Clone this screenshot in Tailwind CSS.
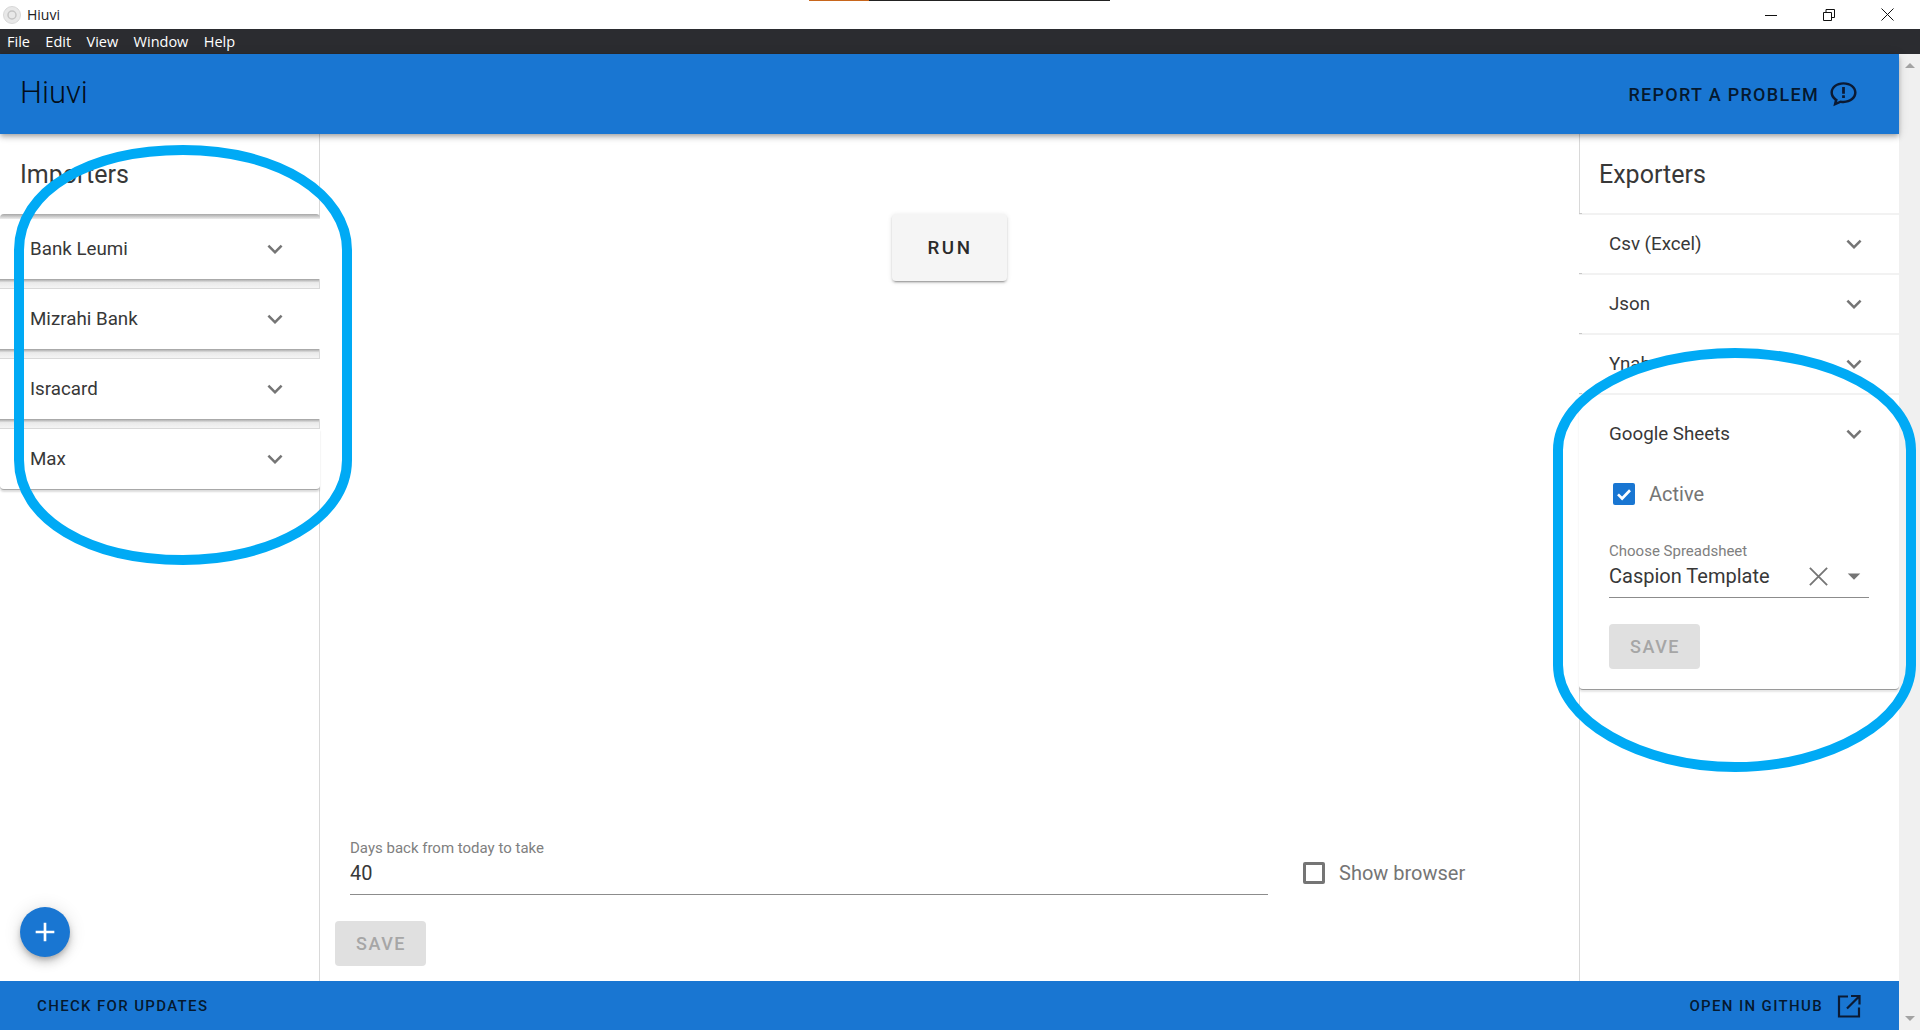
<!DOCTYPE html>
<html lang="en">

<head>
    <meta charset="UTF-8" />
    <title>Hiuvi</title>
    <script src="https://cdn.jsdelivr.net/npm/@tailwindcss/browser@4"></script>
</head>

<body class="relative h-[1030px] w-[1920px] overflow-hidden bg-white flex flex-col font-[Roboto,sans-serif] text-[#383838]">

    <!-- Window title bar -->
    <div class="relative h-[29px] shrink-0 flex items-center bg-white">
        <div class="absolute top-0 left-[809px] h-px w-[60px] bg-[#c8661c]"></div>
        <div class="absolute top-0 left-[869px] h-px w-[241px] bg-[#222222]"></div>
        <svg class="ml-[3px] w-[18px] h-[18px]" viewBox="0 0 18 18">
            <circle cx="9" cy="9" r="8.5" fill="#e8e8e8" stroke="#d8d8d8" />
            <circle cx="9" cy="9" r="4" fill="none" stroke="#c4c4c4" stroke-width="1.5" />
        </svg>
        <span class="ml-[6px] text-[14px] font-['Open_Sans',sans-serif] text-[#222222]">Hiuvi</span>
        <div class="ml-auto flex items-center pr-[26px] gap-[46px]">
            <svg class="w-[12px] h-[12px]" viewBox="0 0 12 12"><path d="M0 6.5H12" stroke="#111" fill="none" /></svg>
            <svg class="w-[12px] h-[12px]" viewBox="0 0 12 12"><path d="M.5 3.5h8v8h-8zM3 3.5V.5h8.500v8H8.500" stroke="#111" fill="none" /></svg>
            <svg class="w-[13px] h-[13px]" viewBox="0 0 13 13"><path d="M.5 .5l12 12M12.500 .5l-12 12" stroke="#111" fill="none" /></svg>
        </div>
    </div>

    <!-- Menu bar -->
    <div class="h-[25px] shrink-0 bg-[#2b2c30] flex items-center pl-[7px] gap-[15.4px] text-[14.5px] font-['Open_Sans',sans-serif] text-white">
        <span>File</span>
        <span>Edit</span>
        <span>View</span>
        <span>Window</span>
        <span>Help</span>
    </div>

    <div class="flex-1 flex min-h-0">
        <div class="w-[1899px] flex flex-col">

            <!-- Header -->
            <header class="relative z-10 h-[80px] shrink-0 bg-[#1976d2] flex items-center justify-between pl-[20px] pr-[39px] shadow-[0_2px_4px_-1px_rgba(0,0,0,0.2),0_4px_5px_0_rgba(0,0,0,0.14),0_1px_10px_0_rgba(0,0,0,0.12)]">
                <h1 class="text-[31px] font-light -mt-[2px] text-black/90">Hiuvi</h1>
                <div class="flex items-center gap-[8px]">
                    <span class="text-[18px] font-medium tracking-[1.3px] text-black/80">REPORT A PROBLEM</span>
                    <svg class="w-[33px] h-[33px]" viewBox="0 0 24 24" fill="#0b1a33">
                        <path d="M12 3C6.500 3 2.500 6.400 2.500 10.600c0 2.300 1.200 4.300 3.100 5.700l-1 4.200 5.300-2.400c.7.1 1.400.2 2.100.2 5.500 0 9.500-3.400 9.500-7.700S17.500 3 12 3zm0 13.600c-.7 0-1.400-.1-2.200-.2l-2.500 1.100.5-2-.8-.5c-1.700-1.100-2.700-2.700-2.700-4.400C4.300 7.400 7.700 4.800 12 4.800s7.700 2.600 7.700 5.800-3.400 6-7.700 6z" />
                        <path d="M11 6.500h2v5h-2zM11 12.500h2v2h-2z" />
                    </svg>
                </div>
            </header>

            <div class="flex-1 flex min-h-0">

                <!-- Importers -->
                <aside class="relative w-[320px] shrink-0 border-r border-[#d9d9d9]">
                    <h2 class="pl-[20px] pt-[23px] h-[80px] text-[25px] leading-[36px]">Importers</h2>
                    <div class="flex flex-col -mr-px">
                        <div class="h-[5px] rounded-t-[4px] bg-linear-to-b from-[#a8a8a8] to-[#eeeeee]"></div>
                        <div class="h-[60px] flex items-center justify-between pl-[30px] pr-[30px] text-[18.75px] bg-white">
                            <span>Bank Leumi</span>
                            <svg class="w-[30px] h-[30px]" viewBox="0 0 24 24" fill="#757575"><path d="M16.590 8.590 12 13.170 7.410 8.590 6 10l6 6 6-6z" /></svg>
                        </div>
                        <div class="h-[10px] bg-linear-to-b from-[#a0a0a0] via-[#eaeaea] via-40% to-[#f4f4f4] border-b border-r border-[#d9d9d9]"></div>
                        <div class="h-[60px] flex items-center justify-between pl-[30px] pr-[30px] text-[18.75px] bg-white">
                            <span>Mizrahi Bank</span>
                            <svg class="w-[30px] h-[30px]" viewBox="0 0 24 24" fill="#757575"><path d="M16.590 8.590 12 13.170 7.410 8.590 6 10l6 6 6-6z" /></svg>
                        </div>
                        <div class="h-[10px] bg-linear-to-b from-[#a0a0a0] via-[#eaeaea] via-40% to-[#f4f4f4] border-b border-r border-[#d9d9d9]"></div>
                        <div class="h-[60px] flex items-center justify-between pl-[30px] pr-[30px] text-[18.75px] bg-white">
                            <span>Isracard</span>
                            <svg class="w-[30px] h-[30px]" viewBox="0 0 24 24" fill="#757575"><path d="M16.590 8.590 12 13.170 7.410 8.590 6 10l6 6 6-6z" /></svg>
                        </div>
                        <div class="h-[10px] bg-linear-to-b from-[#a0a0a0] via-[#eaeaea] via-40% to-[#f4f4f4] border-b border-r border-[#d9d9d9]"></div>
                        <div class="h-[61px] flex items-center justify-between pl-[30px] pr-[30px] text-[18.75px] bg-white rounded-b-[4px] border-b border-[#a8a8a8] shadow-[0_2px_2px_rgba(0,0,0,0.14)]">
                            <span>Max</span>
                            <svg class="w-[30px] h-[30px]" viewBox="0 0 24 24" fill="#757575"><path d="M16.590 8.590 12 13.170 7.410 8.590 6 10l6 6 6-6z" /></svg>
                        </div>
                    </div>
                    <button class="absolute left-[20px] bottom-[24px] w-[50px] h-[50px] rounded-full bg-[#1976d2] flex items-center justify-center shadow-[0_3px_5px_-1px_rgba(0,0,0,0.2),0_6px_10px_0_rgba(0,0,0,0.14),0_1px_18px_0_rgba(0,0,0,0.12)]">
                        <svg class="w-[32px] h-[32px]" viewBox="0 0 24 24" fill="#fff"><path d="M19 13h-6v6h-2v-6H5v-2h6V5h2v6h6v2z" /></svg>
                    </button>
                </aside>

                <!-- Run and settings -->
                <main class="flex-1 flex flex-col items-stretch min-w-0">
                    <div class="flex justify-center pt-[80px] pr-px">
                        <button class="w-[115px] h-[67px] pt-[2px] pl-[2px] rounded-[4px] bg-[#f5f5f5] text-[18.75px] font-medium tracking-[2.5px] text-[#2b2b2b] shadow-[0_3px_1px_-2px_rgba(0,0,0,0.2),0_2px_2px_0_rgba(0,0,0,0.14),0_1px_5px_0_rgba(0,0,0,0.12)]">RUN</button>
                    </div>
                    <div class="mt-auto pl-[15px] pb-[15px]">
                        <div class="flex items-start pl-[15px]">
                            <div class="w-[918px]">
                                <div class="text-[15px] leading-[20px] text-[#808080]">Days back from today to take</div>
                                <div class="h-[37px] flex items-center pb-[6px] text-[20px] border-b border-[#8c8c8c]">40</div>
                            </div>
                            <label class="ml-[35px] mt-[20px] flex items-center gap-[14px] text-[20px] text-[#757575]">
                                <span class="w-[22px] h-[22px] rounded-[2px] border-[3px] border-[#757575]"></span>
                                Show browser
                            </label>
                        </div>
                        <button class="mt-[26px] pl-px w-[91px] h-[45px] rounded-[4px] bg-[#e0e0e0] text-[18px] font-medium tracking-[1.5px] text-[#a6a6a6]">SAVE</button>
                    </div>
                </main>

                <!-- Exporters -->
                <aside class="w-[320px] shrink-0 border-l border-[#d9d9d9]">
                    <h2 class="pl-[19px] pt-[23px] h-[79px] text-[25px] leading-[36px]">Exporters</h2>
                    <div class="flex flex-col -ml-px">
                        <div class="h-[2px] bg-[#f2f2f2]"><div class="w-[3px] h-px bg-[#c8c8c8]"></div></div>
                        <div class="h-[58px] flex items-center justify-between pl-[30px] pr-[30px] text-[18.75px] bg-white">
                            <span>Csv (Excel)</span>
                            <svg class="w-[30px] h-[30px]" viewBox="0 0 24 24" fill="#757575"><path d="M16.590 8.590 12 13.170 7.410 8.590 6 10l6 6 6-6z" /></svg>
                        </div>
                        <div class="h-[2px] bg-[#f2f2f2]"><div class="w-[3px] h-px bg-[#c8c8c8]"></div></div>
                        <div class="h-[58px] flex items-center justify-between pl-[30px] pr-[30px] text-[18.75px] bg-white">
                            <span>Json</span>
                            <svg class="w-[30px] h-[30px]" viewBox="0 0 24 24" fill="#757575"><path d="M16.590 8.590 12 13.170 7.410 8.590 6 10l6 6 6-6z" /></svg>
                        </div>
                        <div class="h-[2px] bg-[#f2f2f2]"><div class="w-[3px] h-px bg-[#c8c8c8]"></div></div>
                        <div class="h-[58px] flex items-center justify-between pl-[30px] pr-[30px] text-[18.75px] bg-white">
                            <span>Ynab</span>
                            <svg class="w-[30px] h-[30px]" viewBox="0 0 24 24" fill="#757575"><path d="M16.590 8.590 12 13.170 7.410 8.590 6 10l6 6 6-6z" /></svg>
                        </div>
                        <div class="h-[2px] bg-[#f2f2f2]"><div class="w-[3px] h-px bg-[#c8c8c8]"></div></div>
                        <div class="h-[295px] pl-[30px] pr-[30px] bg-white rounded-b-[4px] border-b border-[#9a9a9a] shadow-[0_2px_2px_rgba(0,0,0,0.1)]">
                            <div class="h-[78px] flex items-center justify-between text-[18.75px]">
                                <span>Google Sheets</span>
                                <svg class="w-[30px] h-[30px]" viewBox="0 0 24 24" fill="#757575"><path d="M16.590 8.590 12 13.170 7.410 8.590 6 10l6 6 6-6z" /></svg>
                            </div>
                            <label class="flex items-center gap-[14px] pl-[4px] h-[42px] text-[20px] text-[#757575]">
                                <span class="w-[22px] h-[22px] rounded-[2px] bg-[#1976d2] flex items-center justify-center">
                                    <svg class="w-[18px] h-[18px]" viewBox="0 0 24 24" fill="none" stroke="#fff" stroke-width="3.500"><path d="M4 12.500l5.500 5.500L20 7" /></svg>
                                </span>
                                Active
                            </label>
                            <div class="mt-[26px]">
                                <div class="text-[15px] leading-[20px] text-[#808080]">Choose Spreadsheet</div>
                                <div class="h-[37px] flex items-center pb-[6px] text-[20px] border-b border-[#8c8c8c]">
                                    <span>Caspion Template</span>
                                    <svg class="ml-auto w-[23px] h-[23px]" viewBox="0 0 20 20" fill="none" stroke="#757575" stroke-width="1.600"><path d="M2.500 2.500l15 15M17.500 2.500l-15 15" /></svg>
                                    <svg class="ml-[9px] w-[30px] h-[30px]" viewBox="0 0 24 24" fill="#757575"><path d="M7 10l5 5 5-5z" /></svg>
                                </div>
                            </div>
                            <button class="mt-[26px] pl-px w-[91px] h-[45px] rounded-[4px] bg-[#e0e0e0] text-[18px] font-medium tracking-[1.5px] text-[#a6a6a6]">SAVE</button>
                        </div>
                    </div>
                </aside>
            </div>

            <!-- Footer -->
            <footer class="h-[49px] shrink-0 bg-[#1976d2] flex items-center justify-between pl-[37px] pr-[38px] text-[15px] font-medium tracking-[1.35px] text-black/80">
                <span class="mt-px">CHECK FOR UPDATES</span>
                <div class="flex items-center gap-[14px]">
                    <span class="mt-px">OPEN IN GITHUB</span>
                    <svg class="w-[24px] h-[24px]" viewBox="0 0 24 24" fill="none" stroke="#0b1a33" stroke-width="2.200"><path d="M11 2.500H2v20h20v-9M14 2h8.500v8.500M22 2.500 10 14.500" /></svg>
                </div>
            </footer>
        </div>

        <!-- Scrollbar -->
        <div class="w-[21px] bg-[#f0f0f0] flex flex-col items-center justify-between py-[9px]">
            <span class="w-0 h-0 border-x-[5px] border-x-transparent border-b-[5px] border-b-[#a3a3a3]"></span>
            <span class="w-0 h-0 border-x-[5px] border-x-transparent border-t-[5px] border-t-[#a3a3a3]"></span>
        </div>
    </div>

    <!-- Hand-drawn annotation circles -->
    <svg class="absolute inset-0 pointer-events-none" width="1920" height="1030" fill="none" stroke="#00aaf5" stroke-width="10">
        <path d="M19 250C19 190 90 150 183 150C280 150 347 195 347 250V460C347 520 270 560 183 560C90 560 19 520 19 460Z" />
        <path d="M1558 450C1558 395 1640 353 1735 353C1830 353 1911 395 1911 450V665C1911 720 1830 767 1735 767C1640 767 1558 720 1558 665Z" />
    </svg>
</body>

</html>
